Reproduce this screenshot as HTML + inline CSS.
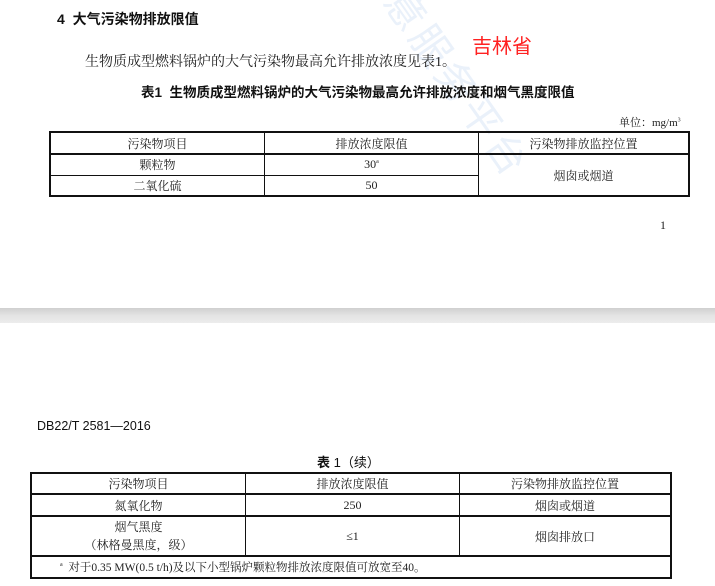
<!DOCTYPE html>
<html><head><meta charset="utf-8"><style>
body{margin:0;width:715px;height:586px;background:#fff;position:relative;overflow:hidden;font-family:"Liberation Serif","Noto Serif CJK SC",serif;color:#222}
.a{position:absolute;white-space:nowrap}
.s{font-family:"Liberation Sans","Noto Sans CJK SC",sans-serif}
table{position:absolute;border-collapse:collapse;font-size:12px;text-align:center}
td{padding:0;border:1px solid #111}
</style></head><body>
<div class="a s" style="top:-25px;left:420px;font-size:40px;color:#eaf1fa;transform:rotate(55deg);transform-origin:left top;letter-spacing:4px">意服务平台</div>
<div class="a s" style="left:57px;top:9px;font-size:14px;font-weight:bold;color:#111">4&nbsp;&nbsp;大气污染物排放限值</div>
<div class="a s" style="left:472px;top:30px;font-size:20px;color:#f22">吉林省</div>
<div class="a" style="left:85px;top:51px;font-size:14px">生物质成型燃料锅炉的大气污染物最高允许排放浓度见表1。</div>
<div class="a s" style="left:141px;top:81px;font-size:13.5px;font-weight:bold;color:#111">表1&nbsp;&nbsp;生物质成型燃料锅炉的大气污染物最高允许排放浓度和烟气黑度限值</div>
<div class="a" style="left:619px;top:114px;font-size:11px">单位：mg/m<sup style="font-size:6px">3</sup></div>
<table style="left:49px;top:131px;width:641px;border:2px solid #111">
<tr style="height:22px;border-bottom:2px solid #111"><td style="width:213px">污染物项目</td><td style="width:213px">排放浓度限值</td><td style="border-left-color:#999">污染物排放监控位置</td></tr>
<tr style="height:21px"><td>颗粒物</td><td>30<sup style="font-size:6px">a</sup></td><td rowspan="2">烟囱或烟道</td></tr>
<tr style="height:21px"><td>二氧化硫</td><td>50</td></tr>
</table>
<div class="a" style="left:660px;top:218px;font-size:12px">1</div>
<div class="a" style="left:0;top:308px;width:715px;height:15px;background:linear-gradient(#d0d0d0,#e4e4e4 50%,#ececec)"></div>
<div class="a s" style="left:37px;top:419px;font-size:12.5px;color:#111">DB22/T 2581—2016</div>
<div class="a s" style="left:317px;top:452px;font-size:13px;color:#111"><b>表</b> 1（续）</div>
<table style="left:30px;top:472px;width:642px;border:2px solid #111">
<tr style="height:21px;border-bottom:2px solid #111"><td style="width:213px">污染物项目</td><td style="width:213px">排放浓度限值</td><td>污染物排放监控位置</td></tr>
<tr style="height:22px;border-bottom:2px solid #111"><td>氮氧化物</td><td>250</td><td>烟囱或烟道</td></tr>
<tr style="height:40px;border-bottom:2px solid #111"><td style="line-height:18px">烟气黑度<br>（林格曼黑度，级）</td><td>≤1</td><td>烟囱排放口</td></tr>
<tr style="height:22px"><td colspan="3" style="text-align:left;padding-left:28px;font-size:11.5px"><sup style="font-size:6px">a</sup>&nbsp; 对于0.35 MW(0.5 t/h)及以下小型锅炉颗粒物排放浓度限值可放宽至40。</td></tr>
</table>
</body></html>
